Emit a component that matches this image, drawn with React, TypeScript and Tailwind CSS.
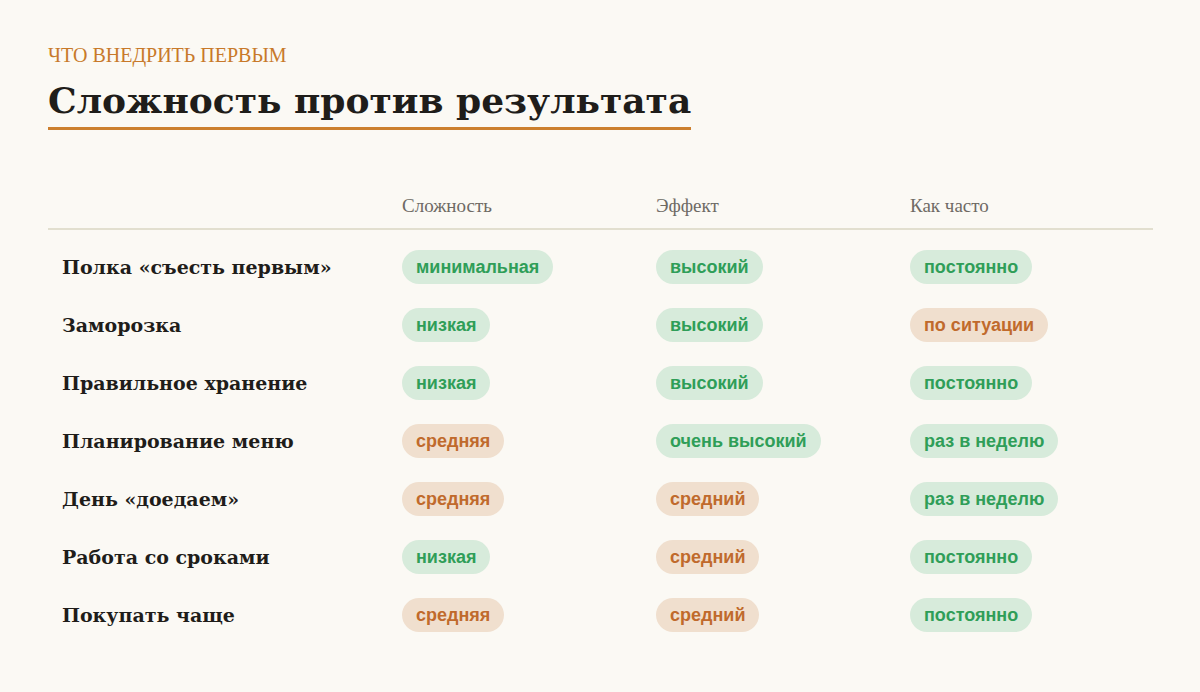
import React from 'react'

type Tone = 'good' | 'warn'

type Row = {
  name: string
  effort: [string, Tone]
  effect: [string, Tone]
  freq: [string, Tone]
}

const ROWS: Row[] = [
  { name: 'Полка «съесть первым»', effort: ['минимальная', 'good'], effect: ['высокий', 'good'], freq: ['постоянно', 'good'] },
  { name: 'Заморозка', effort: ['низкая', 'good'], effect: ['высокий', 'good'], freq: ['по ситуации', 'warn'] },
  { name: 'Правильное хранение', effort: ['низкая', 'good'], effect: ['высокий', 'good'], freq: ['постоянно', 'good'] },
  { name: 'Планирование меню', effort: ['средняя', 'warn'], effect: ['очень высокий', 'good'], freq: ['раз в неделю', 'good'] },
  { name: 'День «доедаем»', effort: ['средняя', 'warn'], effect: ['средний', 'warn'], freq: ['раз в неделю', 'good'] },
  { name: 'Работа со сроками', effort: ['низкая', 'good'], effect: ['средний', 'warn'], freq: ['постоянно', 'good'] },
  { name: 'Покупать чаще', effort: ['средняя', 'warn'], effect: ['средний', 'warn'], freq: ['постоянно', 'good'] },
]

function Pill({ value }: { value: [string, Tone] }) {
  const [label, tone] = value
  return (
    <span
      className={
        tone === 'good'
          ? 'inline-flex h-[34px] items-center rounded-full bg-[#d7ebdb] px-[14px] font-["Liberation_Sans",Arial,sans-serif] text-[18px] font-bold text-[#2f9e58]'
          : 'inline-flex h-[34px] items-center rounded-full bg-[#f0dfce] px-[14px] font-["Liberation_Sans",Arial,sans-serif] text-[18px] font-bold text-[#c06a2c]'
      }
    >
      {label}
    </span>
  )
}

export default function App() {
  return (
    <div className="min-h-[692px] bg-[#fbf9f4] px-12 pt-[43px] font-['Liberation_Serif',Georgia,serif] text-[#1f1d1a]">
      <p className="text-[20px] leading-[24px] text-[#c8792a]">ЧТО ВНЕДРИТЬ ПЕРВЫМ</p>
      <h1 className="mt-[8px] inline-block border-b-[3px] border-[#cc7f2e] pb-[2px] font-['DejaVu_Serif',Georgia,serif] text-[36px] font-bold leading-[50px]">
        Сложность против результата
      </h1>

      <div className="mt-[64px] w-[1105px]">
        <div className="grid grid-cols-[340px_254px_254px_1fr] border-b-2 border-[#e2dfcf] pb-[10px] text-[19px] leading-[24px] text-[#6e6a64]">
          <div />
          <div className="pl-[14px]">Сложность</div>
          <div className="pl-[14px]">Эффект</div>
          <div className="pl-[14px]">Как часто</div>
        </div>
        <div className="pt-[8px]">
          {ROWS.map((row) => (
            <div
              key={row.name}
              className="grid h-[58px] grid-cols-[340px_254px_254px_1fr] items-center"
            >
              <div className="pl-[14px] font-['DejaVu_Serif',Georgia,serif] text-[19px] font-bold">
                {row.name}
              </div>
              <div className="pl-[14px]">
                <Pill value={row.effort} />
              </div>
              <div className="pl-[14px]">
                <Pill value={row.effect} />
              </div>
              <div className="pl-[14px]">
                <Pill value={row.freq} />
              </div>
            </div>
          ))}
        </div>
      </div>
    </div>
  )
}
